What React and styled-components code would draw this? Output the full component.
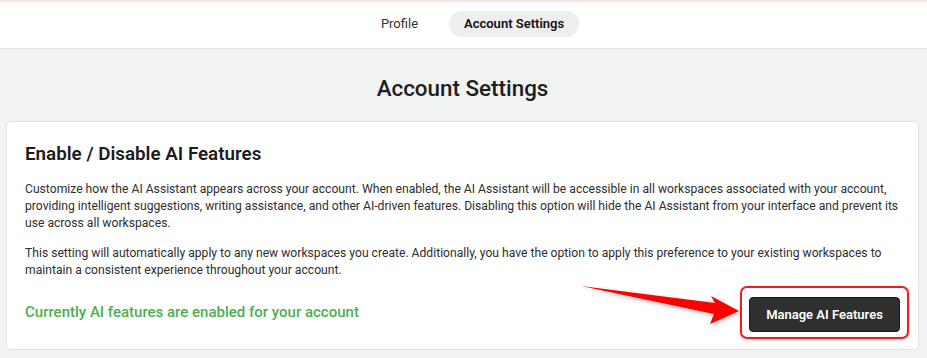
import styled, { createGlobalStyle } from "styled-components"

const Global = createGlobalStyle`
    body {
        margin : 0;
        background : #f1f2f2;
        font-family : Roboto, "Liberation Sans", sans-serif;
        color : #222;
    }
    * { box-sizing : border-box; }
`
const Header = styled.div`
    background : #fff;
    border-top : 2px solid #f6e3dc;
    border-bottom : 1px solid #dfe1e2;
    height : 49px;
    display : flex;
    justify-content : center;
    align-items : center;
    gap : 16px;
    padding : 0 0 2px 18px;
`
const Tab = styled.div`
    font-size : 13px;
    font-weight : ${p => p.active ? 600 : 400};
    color : ${p => p.active ? "#111" : "#333"};
    background : ${p => p.active ? "#eeeef0" : "transparent"};
    border-radius : 14px;
    padding : 6px 15px;
    line-height : 14px;
`
const Main = styled.div`
    padding : 0 8px 0 6px;
`
const Title = styled.h1`
    margin : 0;
    text-align : center;
    font-size : 22.4px;
    font-weight : 500;
    color : #1e1e1e;
    padding : 26px 0 20px;
    line-height : 26px;
`
const Card = styled.div`
    background : #fff;
    border : 1px solid #e1e3e4;
    border-radius : 5px;
    padding : 20px 9px 10px 18px;
`
const CardTitle = styled.h2`
    margin : 0 0 15px;
    font-size : 18.8px;
    font-weight : 600;
    color : #1b1b1b;
    line-height : 24px;
`
const Para = styled.p`
    margin : 0 0 13px;
    padding-right : 9px;
    font-size : 12.15px;
    line-height : 17px;
    color : #2e2e2e;
`
const Footer = styled.div`
    display : flex;
    justify-content : space-between;
    align-items : center;
    margin-top : -6px;
`
const Status = styled.span`
    color : #4caf50;
    font-size : 15px;
    font-weight : 500;
    margin-top : -2px;
`
const Highlight = styled.div`
    position : relative;
    border : 2px solid #ee1c24;
    border-radius : 7px;
    padding : 9px 7px 5px;
    box-shadow : 0 1px 3px rgba(0,0,0,0.2);
`
const Button = styled.button`
    display : block;
    background : #2f2f2f;
    color : #fff;
    border : 1px solid #1a1a1a;
    border-radius : 4px;
    font-family : inherit;
    font-size : 13px;
    font-weight : 600;
    padding : 0;
    height : 35px;
    width : 151px;
`
const Arrow = styled.svg`
    position : absolute;
    left : -165px;
    top : -5px;
    overflow : visible;
    filter : drop-shadow(1px 2px 2px rgba(0,0,0,0.25));
`

const App = () => {
  return (
    <>
    <Global />
    <Header>
      <Tab>Profile</Tab>
      <Tab active>Account Settings</Tab>
    </Header>
    <Main>
      <Title>Account Settings</Title>
      <Card>
        <CardTitle>Enable / Disable AI Features</CardTitle>
        <Para>
          Customize how the AI Assistant appears across your account. When enabled, the AI Assistant will be accessible in all workspaces associated with your account, providing intelligent suggestions, writing assistance, and other AI-driven features. Disabling this option will hide the AI Assistant from your interface and prevent its use across all workspaces.
        </Para>
        <Para>
          This setting will automatically apply to any new workspaces you create. Additionally, you have the option to apply this preference to your existing workspaces to maintain a consistent experience throughout your account.
        </Para>
        <Footer>
          <Status>Currently AI features are enabled for your account</Status>
          <Highlight>
            <Arrow width="165" height="45">
              <polygon points="4,3 138,20 134,13 162,28 133,41 137,31" fill="#f00" />
            </Arrow>
            <Button>Manage AI Features</Button>
          </Highlight>
        </Footer>
      </Card>
    </Main>
    </>
  )
}

export default App
